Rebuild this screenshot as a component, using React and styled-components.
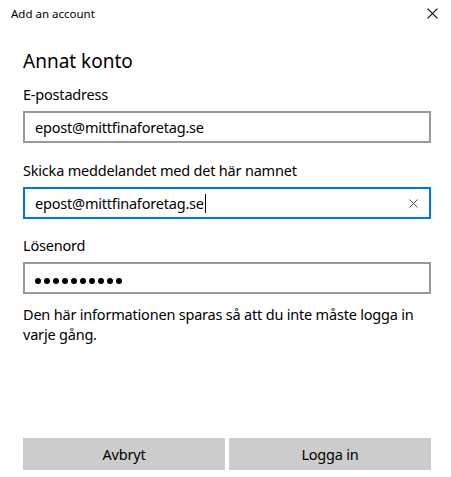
import React from 'react';
import styled, { createGlobalStyle } from 'styled-components';

const GlobalStyle = createGlobalStyle`
    html, body {
        margin: 0;
        padding: 0;
        background: #ffffff;
    }
    body {
        font-family: "Segoe UI", "Noto Sans", sans-serif;
        color: #000000;
    }
`;

const Window = styled.div`
    width: 451px;
    height: 477px;
    display: flex;
    flex-direction: column;
    background: #ffffff;
    box-sizing: border-box;
`;

const TitleBar = styled.div`
    height: 27px;
    display: flex;
    align-items: center;
    justify-content: space-between;
    padding: 0 13px 0 11px;
    font-size: 11.5px;
    color: #000000;
`;

const CloseButton = styled.svg`
    width: 11px;
    height: 11px;
`;

const Content = styled.div`
    flex: 1;
    display: flex;
    flex-direction: column;
    padding: 0 20px 7px 23px;
    font-size: 14.5px;
    letter-spacing: -0.2px;
`;

const Heading = styled.h1`
    margin: 20px 0 0 0;
    font-size: 19px;
    font-weight: 400;
    line-height: 28px;
    letter-spacing: 0;
`;

const Label = styled.div`
    margin-top: ${p => p.top}px;
    line-height: 20px;
`;

const Field = styled.div`
    margin-top: 7px;
    height: 32px;
    box-sizing: border-box;
    border: 2px solid ${p => (p.focused ? '#0078d7' : '#999999')};
    display: flex;
    align-items: center;
    padding: 0 10px;
`;

const Value = styled.span`
    flex: 1;
    display: flex;
    align-items: center;
    white-space: nowrap;
`;

const Caret = styled.span`
    display: inline-block;
    width: 1px;
    height: 19px;
    margin-left: 1px;
    background: #000000;
`;

const ClearIcon = styled.svg`
    width: 9px;
    height: 9px;
    margin-right: 1px;
`;

const Dots = styled.div`
    display: flex;
    gap: 3px;
    margin-top: 5px;
`;

const Dot = styled.span`
    width: 6px;
    height: 6px;
    border-radius: 50%;
    background: #000000;
`;

const Note = styled.p`
    margin: 10px 0 0 0;
    line-height: 20px;
`;

const Footer = styled.div`
    margin-top: auto;
    display: grid;
    grid-template-columns: 1fr 1fr;
    gap: 4px;
`;

const Button = styled.button`
    height: 32px;
    border: none;
    background: #cccccc;
    font-family: inherit;
    font-size: inherit;
    letter-spacing: inherit;
    color: #000000;
    padding: 0;
`;

const Cross = ({ as: Comp, color }) => (
    <Comp viewBox="0 0 10 10">
        <path d="M0.5 0.5 L9.5 9.5 M9.5 0.5 L0.5 9.5" stroke={color} strokeWidth="1" fill="none" />
    </Comp>
);

const App = () => {
    return (
        <Window>
            <GlobalStyle />
            <TitleBar>
                <span>Add an account</span>
                <Cross as={CloseButton} color="#000000" />
            </TitleBar>
            <Content>
                <Heading>Annat konto</Heading>

                <Label top={9}>E-postadress</Label>
                <Field>
                    <Value>epost@mittfinaforetag.se</Value>
                </Field>

                <Label top={17}>Skicka meddelandet med det här namnet</Label>
                <Field focused>
                    <Value>
                        epost@mittfinaforetag.se
                        <Caret />
                    </Value>
                    <Cross as={ClearIcon} color="#444444" />
                </Field>

                <Label top={16}>Lösenord</Label>
                <Field>
                    <Dots>
                        {Array.from({ length: 10 }).map((_, i) => (
                            <Dot key={i} />
                        ))}
                    </Dots>
                </Field>

                <Note>Den här informationen sparas så att du inte måste logga in varje gång.</Note>

                <Footer>
                    <Button>Avbryt</Button>
                    <Button>Logga in</Button>
                </Footer>
            </Content>
        </Window>
    );
};

export default App;
